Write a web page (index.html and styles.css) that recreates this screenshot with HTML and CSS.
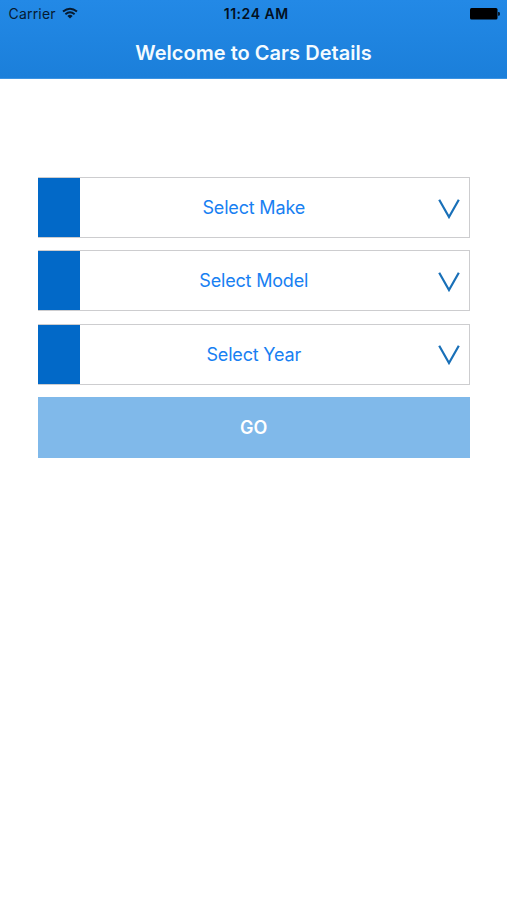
FILE: index.html
```html
<!DOCTYPE html>
<html lang="en">
<head>
<meta charset="utf-8">
<title>Cars Details</title>
<link rel="stylesheet" href="styles.css">
</head>
<body>
<header class="header">
  <div class="status">
    <div class="carrier"><span>Carrier</span>
      <svg class="wifi" viewBox="0 0 16 12" width="16" height="12"><g fill="none" stroke="#061a30" stroke-width="1.9"><path d="M1 4.6Q8 -1.3 15 4.6"/><path d="M3.4 7.2Q8 3.3 12.6 7.2"/></g><path d="M5.4 8.9Q8 6.8 10.6 8.9L8 11.6Z" fill="#061a30"/></svg>
    </div>
    <time class="time">11:24 AM</time>
    <svg class="battery" viewBox="0 0 30 12" width="30" height="12"><rect width="27.5" height="11.5" rx="1.5"/><path d="M28.2 4h.4a1.2 1.2 0 0 1 1.2 1.2v1.3a1.2 1.2 0 0 1-1.2 1.2h-.4z"/></svg>
  </div>
  <h1 class="title"><span>Welcome to Cars Details</span></h1>
</header>
<main class="form">
  <button class="select"><span class="swatch"></span><span class="label">Select Make</span><svg class="chevron" viewBox="0 0 22 20" width="22" height="20"><path d="M1.2 .8 11 18 20.8 .8"/></svg></button>
  <button class="select"><span class="swatch"></span><span class="label">Select Model</span><svg class="chevron" viewBox="0 0 22 20" width="22" height="20"><path d="M1.2 .8 11 18 20.8 .8"/></svg></button>
  <button class="select"><span class="swatch"></span><span class="label">Select Year</span><svg class="chevron" viewBox="0 0 22 20" width="22" height="20"><path d="M1.2 .8 11 18 20.8 .8"/></svg></button>
  <button class="go">GO</button>
</main>
</body>
</html>
```
FILE: styles.css
```css
* { box-sizing: border-box; }
body { margin: 0; min-height: 900px; background: #fff; font-family: Inter, "Liberation Sans", sans-serif; }
button { margin: 0; padding: 0; font: inherit; border-radius: 0; }
.header { height: 79px; background: linear-gradient(#2389e6, #1b7fda); border-bottom: 1px solid #3c93e2; }
.status { height: 27px; padding: 0 7px 0 8.5px; display: grid; grid-template-columns: 1fr auto 1fr; align-items: center; color: #061a30; font-size: 14px; }
.carrier { display: flex; align-items: center; gap: 6px; letter-spacing: 0.2px; }
.wifi { margin-top: -1px; }
.time { color: #03101f; font-weight: 600; font-size: 14px; letter-spacing: 0.55px; position: relative; left: 2px; }
.battery { justify-self: end; }
.title { margin: 0; height: 51px; display: flex; align-items: center; justify-content: center; color: #f4fbff; font-size: 20px; font-weight: 600; letter-spacing: 0.03px; }
.form { display: flex; flex-direction: column; gap: 12.3px; padding: 98px 37px 0 37.5px; }
.select { height: 61px; border: 1px solid #cdcdcf; background: #fff; display: grid; grid-template-columns: 41px 1fr 41px; align-items: center; color: #1880f2; }
.swatch { align-self: stretch; background: #0269c8; margin-left: -1px; }
.label { text-align: center; font-size: 18px; letter-spacing: -0.18px; }
.chevron { margin-left: 10px; margin-top: 2px; fill: none; stroke: #1970b8; stroke-width: 2.2; }
.go { height: 61px; border: 0; background: #80b9ea; color: #fff; font-size: 18px; font-weight: 600; }
```
